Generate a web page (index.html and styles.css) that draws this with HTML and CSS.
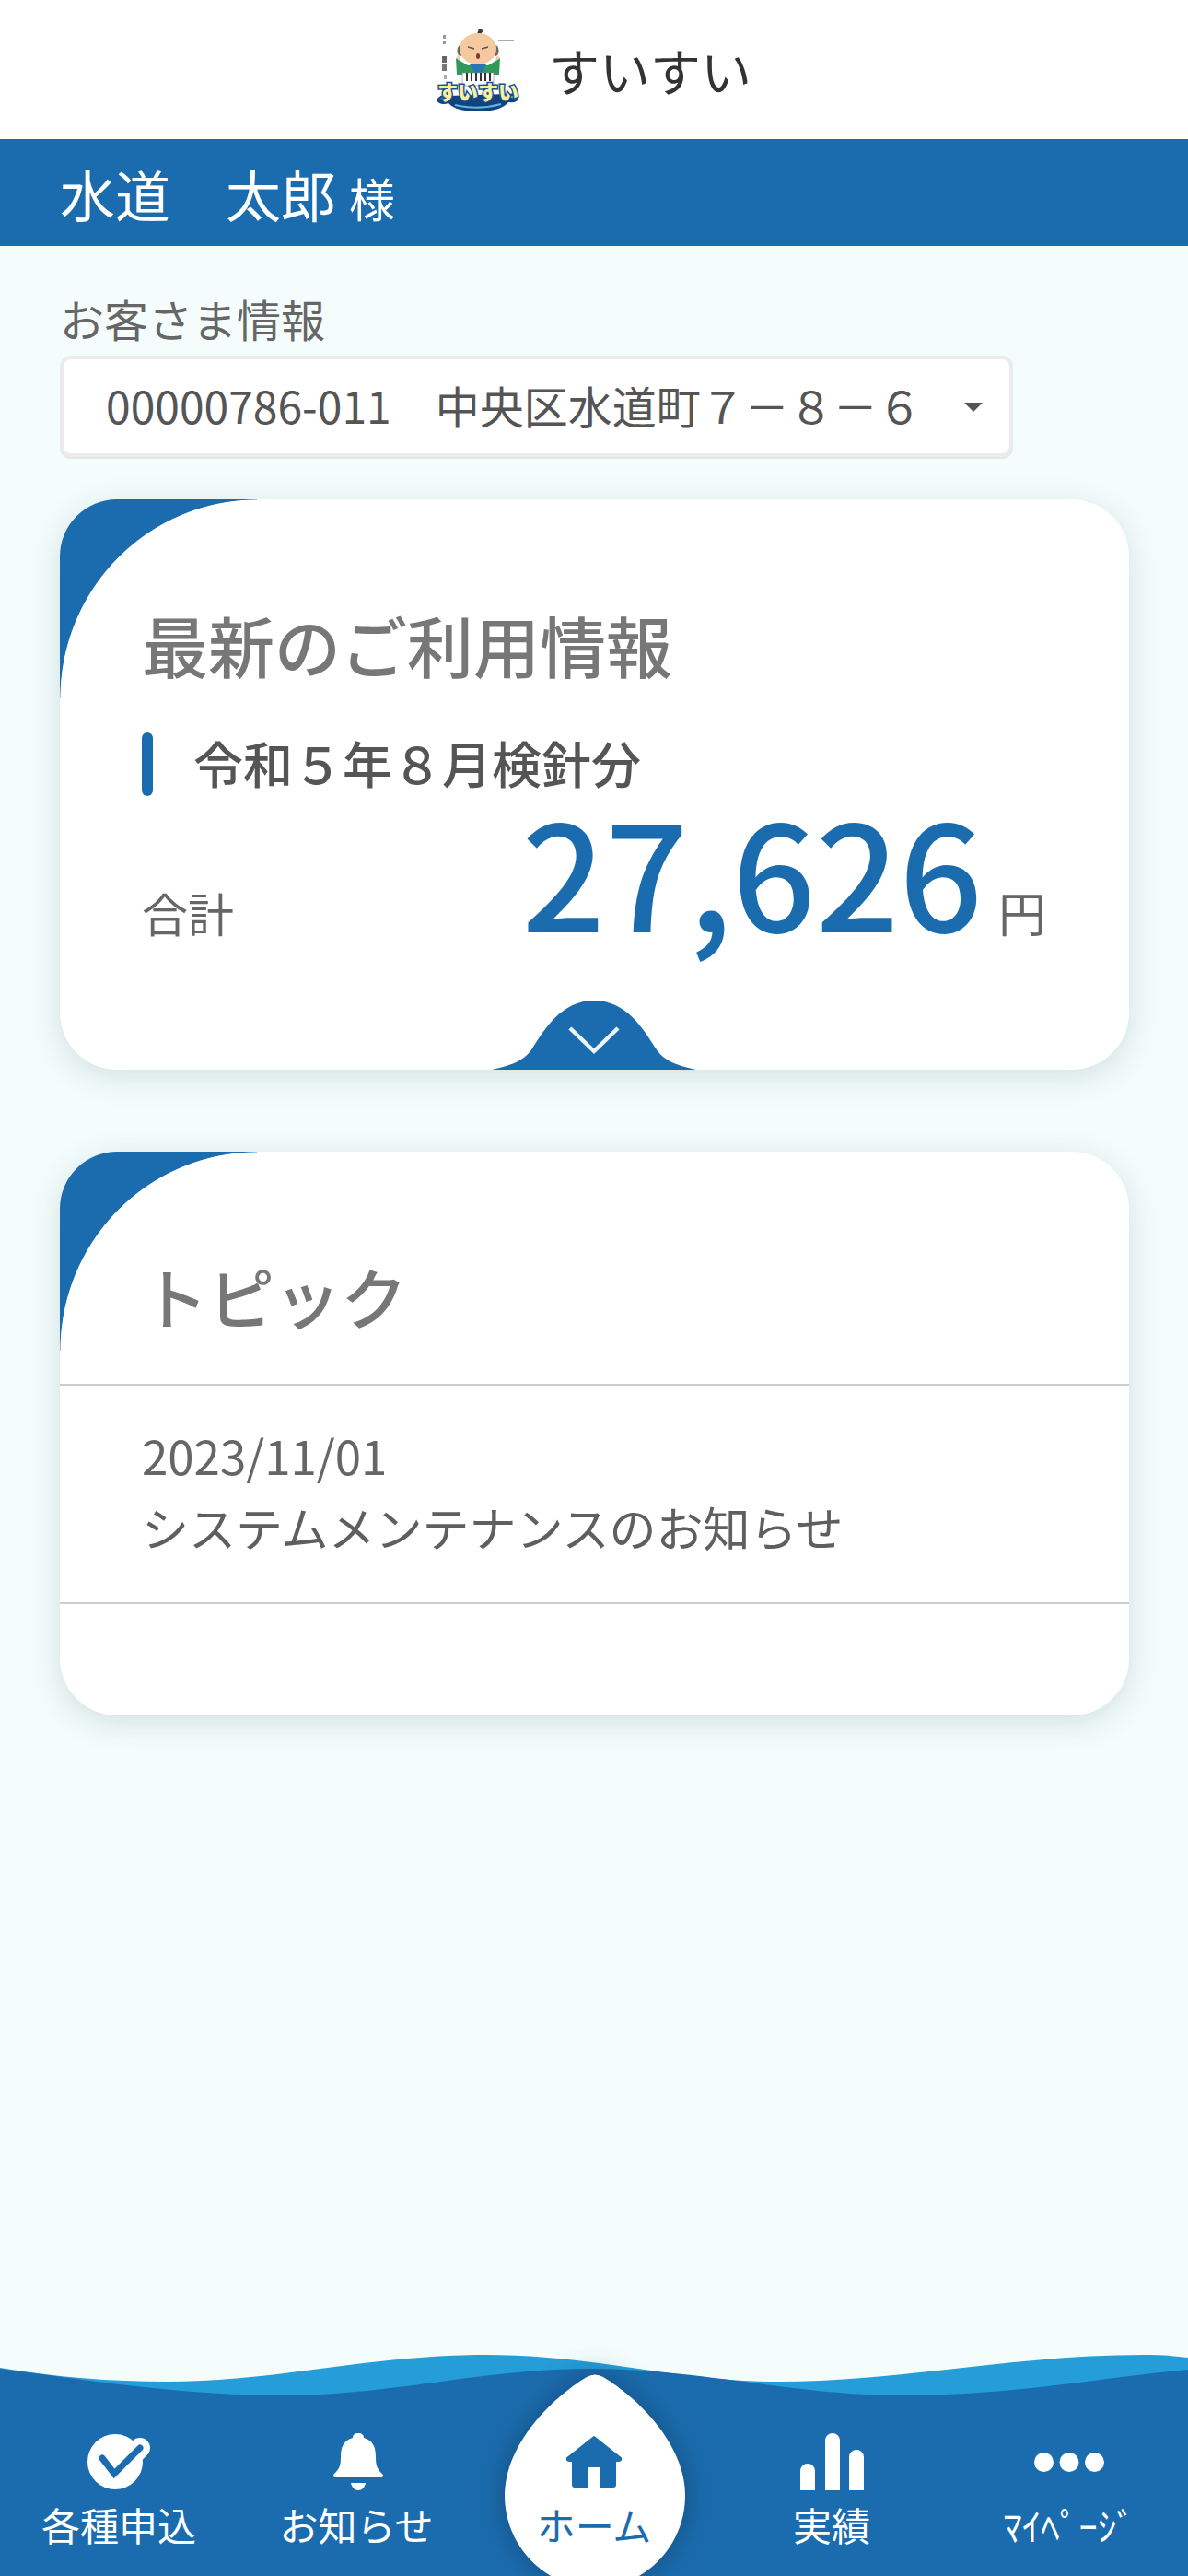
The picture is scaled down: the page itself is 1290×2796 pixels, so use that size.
FILE: index.html
```html
<!DOCTYPE html>
<html lang="ja">
<head>
  <meta charset="UTF-8" />
  <meta name="viewport" content="width=device-width, initial-scale=1.0" />
  <title>すいすい</title>
  <link rel="stylesheet" href="styles.css">
</head>
<body>
  <div class="page">
    <header class="app-header">
      <svg class="logo" viewBox="0 0 90 90" width="90" height="90" role="img" aria-label="すいすい">
        <path d="M46 0 l5 2 -3 4 1 6 -6 0 1 -6z" fill="#3a3a3a"/>
        <ellipse cx="26" cy="24" rx="3.5" ry="6" fill="#6f6a55"/>
        <ellipse cx="64" cy="24" rx="3.5" ry="6" fill="#6f6a55"/>
        <ellipse cx="45" cy="22" rx="20" ry="17" fill="#f5c9a0"/>
        <path d="M34 20 l7 2 M56 20 l-7 2" stroke="#555" stroke-width="1.4"/>
        <ellipse cx="45" cy="30" rx="2" ry="3" fill="#7a3b2e"/>
        <path d="M21 32 L24 34 L34 40 H56 L66 34 L69 32 L68 50 H22z" fill="#2f9a5a"/>
        <path d="M21 32 l3 -3 2 6z M69 32 l-3 -3 -2 6z" fill="#f5c9a0"/>
        <path d="M36 39 H54 L49 48 H41z" fill="#2a76b4"/>
        <rect x="28" y="48" width="34" height="14" fill="#fff" stroke="#888" stroke-width=".6"/>
        <path d="M33 48 v9 M38 48 v9 M43 48 v9 M48 48 v9 M53 48 v9 M58 48 v9" stroke="#333" stroke-width="2"/>
        <rect x="7" y="7" width="3" height="4" fill="#999"/>
        <rect x="7" y="13" width="3" height="4" fill="#999"/>
        <rect x="6" y="30" width="5" height="7" fill="#666"/>
        <rect x="6" y="39" width="5" height="7" fill="#777"/>
        <rect x="8" y="50" width="3" height="5" fill="#aaa"/>
        <rect x="67" y="12" width="17" height="2" fill="#aaa"/>
        <path d="M0 78 Q4 70 12 73 L78 71 Q87 69 89 76 Q88 81 78 80 Q70 90 45 90 Q20 90 13 81 Q4 84 0 78z" fill="#14427f"/>
        <path d="M4 77 Q9 73 14 76 M76 75 Q82 72 86 76 M20 83 Q45 89 70 82" fill="none" stroke="#5cb6e6" stroke-width="2"/>
        <text class="logo-text" x="45" y="77" text-anchor="middle">すいすい</text>
      </svg>
      <span class="app-title">すいすい</span>
    </header>

    <div class="user-band">
      <span class="user-name">水道　太郎</span>
      <span class="user-suffix">様</span>
    </div>

    <main class="content">
      <div class="field-label">お客さま情報</div>
      <div class="customer-select">
        <span>00000786-011　中央区水道町７－８－６</span>
        <span class="select-arrow"></span>
      </div>

      <section class="card usage-card">
        <h2 class="card-title">最新のご利用情報</h2>
        <div class="period">令和５年８月検針分</div>
        <div class="total-row">
          <span class="total-label">合計</span>
          <span class="total-value">
            <span class="amount">27,626</span>
            <span class="yen">円</span>
          </span>
        </div>
        <svg class="expand-tab" viewBox="0 0 222 75" width="222" height="75" aria-hidden="true">
          <path d="M0 75 C24 70 36 64 44 52 C58 30 76 0 111 0 C146 0 164 30 178 52 C186 64 198 70 222 75z" fill="#1b6cae"/>
          <path d="M85 30 L111 55 L137 30" fill="none" stroke="#eef4f8" stroke-width="4.5"/>
        </svg>
      </section>

      <section class="card topic-card">
        <h2 class="card-title topic-title">トピック</h2>
        <div class="topic-item">
          <div class="topic-date">2023/11/01</div>
          <div class="topic-text">システムメンテナンスのお知らせ</div>
        </div>
        <div class="topic-empty"></div>
      </section>
    </main>

    <nav class="bottom-nav">
      <svg class="waves" viewBox="0 0 1290 246" width="1290" height="246" aria-hidden="true">
        <path d="M0 20 C60 30 120 35 181 35 C300 35 400 6 526 6 C650 6 730 35 847 35 C980 35 1100 6 1242 6 C1260 6 1275 7 1290 9 V246 H0z" fill="#259dd8"/>
        <path d="M0 21 C100 34 200 50 304 50 C430 50 520 21 642 21 C760 21 860 50 979 50 C1100 50 1200 30 1290 22 V246 H0z" fill="#1b6cae"/>
      </svg>

      <svg class="home-drop" viewBox="0 0 196 219" width="196" height="219" aria-hidden="true">
        <path d="M89 3 Q98 -2 107 3 C145 26 196 76 196 132 C196 186 152 232 98 232 C44 232 0 186 0 132 C0 76 51 26 89 3z" fill="#fff"/>
      </svg>

      <a class="nav-item">
        <svg class="nav-icon" viewBox="0 0 68 62" width="68" height="62" aria-hidden="true">
          <circle cx="30" cy="31" r="30" fill="#fff"/>
          <path d="M29 44 L57 16" stroke="#fff" stroke-width="22" stroke-linecap="round"/>
          <path d="M16 27 L29 44 L57 16" fill="none" stroke="#1b6cae" stroke-width="7" stroke-linecap="round" stroke-linejoin="miter"/>
        </svg>
        <span>各種申込</span>
      </a>
      <a class="nav-item">
        <svg class="nav-icon nav-icon-bell" viewBox="0 0 54 62" width="54" height="62" aria-hidden="true">
          <path d="M27 0 C31 0 33 2 33 5 C43 8 46 15 46 26 C46 36 48 39 53 44 C55 46 54 48 51 48 H3 C0 48 -1 46 1 44 C6 39 8 36 8 26 C8 15 11 8 21 5 C21 2 23 0 27 0z" fill="#fff"/>
          <path d="M19 54 H35 C34 59 31 62 27 62 C23 62 20 59 19 54z" fill="#fff"/>
        </svg>
        <span>お知らせ</span>
      </a>
      <a class="nav-item nav-home">
        <svg class="nav-icon" viewBox="0 0 60 62" width="60" height="62" aria-hidden="true">
          <path d="M30 4 L59 27 Q60 30 56 30 H53 V56 Q53 58 51 58 H37 V36 H23 V58 H9 Q7 58 7 56 V30 H4 Q0 30 1 27z" fill="#1b6cae" stroke="#1b6cae" stroke-width="2" stroke-linejoin="round"/>
        </svg>
        <span>ホーム</span>
      </a>
      <a class="nav-item">
        <svg class="nav-icon" viewBox="0 0 69 62" width="69" height="62" aria-hidden="true">
          <path d="M0 62 V41 A8 8 0 0 1 16 41 V62z M27 62 V8 A8 8 0 0 1 43 8 V62z M53 62 V26 A8 8 0 0 1 69 26 V62z" fill="#fff"/>
        </svg>
        <span>実績</span>
      </a>
      <a class="nav-item">
        <svg class="nav-icon" viewBox="0 0 76 62" width="76" height="62" aria-hidden="true">
          <circle cx="10.5" cy="31.5" r="10.5" fill="#fff"/>
          <circle cx="38" cy="31.5" r="10.5" fill="#fff"/>
          <circle cx="65.5" cy="31.5" r="10.5" fill="#fff"/>
        </svg>
        <span class="nav-mypage">ﾏｲﾍﾟｰｼﾞ</span>
      </a>
    </nav>
  </div>
</body>
</html>
```

FILE: styles.css
```css
* {
  box-sizing: border-box;
}

body {
  margin: 0;
  background-color: #f4fdfc;
  font-family: "Noto Sans CJK JP", "Noto Sans", sans-serif;
  color: #666;
}

.page {
  display: flex;
  flex-direction: column;
  width: 1290px;
  height: 2796px;
  overflow: hidden;
}

.app-header {
  display: flex;
  align-items: center;
  justify-content: center;
  gap: 32px;
  height: 151px;
  background-color: #fff;
}

.logo-text {
  font-size: 22px;
  font-weight: 900;
  fill: #f7f19a;
  stroke: #1a4f96;
  stroke-width: 3px;
  paint-order: stroke;
}

.app-title {
  font-size: 55px;
  color: #333;
  line-height: 1;
}

.user-band {
  display: flex;
  align-items: baseline;
  gap: 14px;
  height: 116px;
  padding-left: 65px;
  background-color: #1b6cae;
  color: #fff;
  line-height: 118px;
}

.user-name {
  font-size: 60px;
}

.user-suffix {
  font-size: 50px;
}

.content {
  flex: 1;
  padding: 44px 64px 0 65px;
}

.field-label {
  font-size: 48px;
  line-height: 68px;
  color: #666;
}

.customer-select {
  display: flex;
  align-items: center;
  justify-content: space-between;
  width: 1035px;
  height: 110px;
  margin-top: 7px;
  padding: 0 29px 4px 46px;
  background-color: #fff;
  border: 4px solid #ebebeb;
  border-radius: 12px;
  box-shadow: 0 2px 0 #e6e6e6;
  font-size: 48px;
  color: #555;
}

.select-arrow {
  width: 0;
  height: 0;
  margin-top: 6px;
  border-left: 10px solid transparent;
  border-right: 10px solid transparent;
  border-top: 10px solid #555;
}

.card {
  position: relative;
  overflow: hidden;
  width: 1161px;
  background-color: #fff;
  border-radius: 62px;
  box-shadow: 0 8px 34px rgba(40, 70, 90, 0.16);
}

/* blue corner behind the big white curve */
.card::before {
  content: "";
  position: absolute;
  top: 0;
  left: 0;
  width: 214px;
  height: 216px;
  background: radial-gradient(ellipse 214px 216px at 100% 100%, #fff 99.6%, #1b6cae 100%);
}

.card-title {
  position: relative;
  margin: 0;
  font-size: 72px;
  font-weight: 500;
  line-height: 100px;
  color: #777;
}

.usage-card {
  height: 619px;
  margin-top: 46px;
  padding: 107px 90px 0 89px;
}

.period {
  position: relative;
  height: 69px;
  margin-top: 46px;
  padding-left: 56px;
  font-size: 54px;
  font-weight: 500;
  line-height: 66px;
  color: #555;
}

.period::before {
  content: "";
  position: absolute;
  left: 0;
  top: 0;
  width: 12px;
  height: 69px;
  background-color: #1b6cae;
  border-radius: 6px;
}

.total-row {
  display: flex;
  align-items: baseline;
  justify-content: space-between;
  margin-top: 14px;
  line-height: 130px;
}

.total-label {
  font-size: 50px;
}

.total-value {
  display: flex;
  align-items: baseline;
  gap: 17px;
}

.amount {
  font-size: 159px;
  font-weight: 500;
  color: #1b6cae;
}

.yen {
  font-size: 52px;
}

.expand-tab {
  position: absolute;
  left: 469px;
  bottom: 0;
}

.topic-card {
  height: 612px;
  margin-top: 89px;
}

.topic-title {
  height: 254px;
  padding: 106px 0 0 89px;
  border-bottom: 2px solid #ccc;
}

.topic-item {
  height: 237px;
  padding: 40px 0 0 89px;
  border-bottom: 2px solid #ccc;
  font-size: 51px;
  line-height: 70px;
}

.topic-text {
  margin-top: 8px;
  color: #5f5f5f;
}

.bottom-nav {
  position: relative;
  display: grid;
  grid-template-columns: repeat(5, 258px);
  height: 246px;
  overflow: hidden;
}

.waves {
  position: absolute;
  top: 0;
  left: 0;
}

.home-drop {
  position: absolute;
  top: 27px;
  left: 548px;
  filter: drop-shadow(0 0 16px rgba(10, 40, 70, 0.45));
}

.nav-item {
  position: relative;
  display: flex;
  flex-direction: column;
  align-items: center;
  padding-top: 91px;
  font-size: 42px;
  line-height: 50px;
  color: #fff;
}

.nav-item span {
  margin-top: 12px;
}

.nav-icon-bell {
  margin-left: 4px;
}

.nav-home {
  color: #1b6cae;
}

.nav-item .nav-mypage {
  font-size: 41px;
}
```
